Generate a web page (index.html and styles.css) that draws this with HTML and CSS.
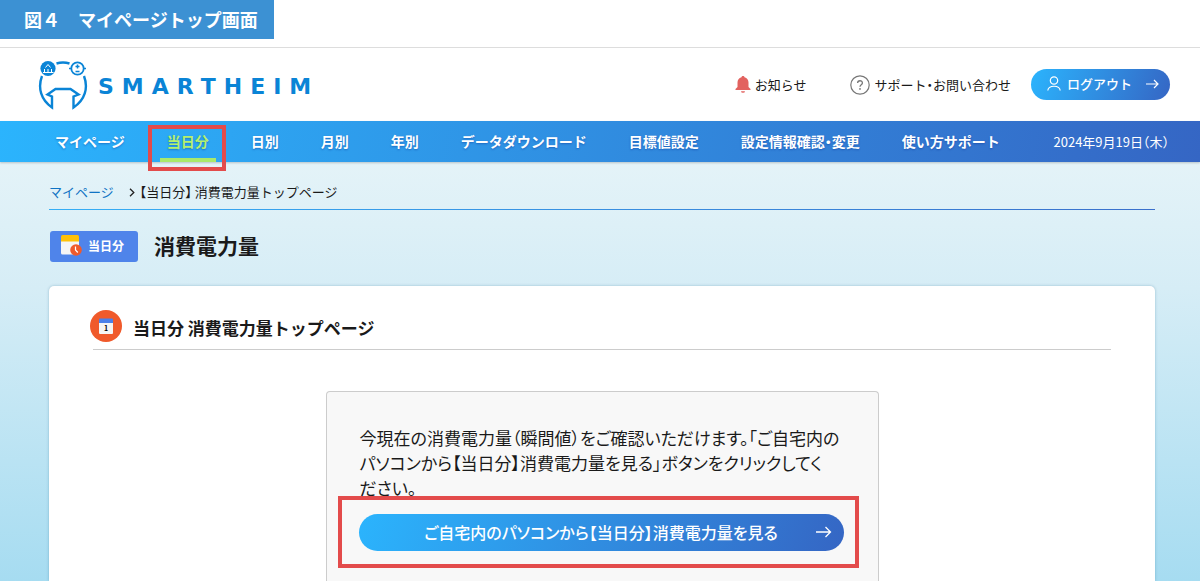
FILE: index.html
```
<!DOCTYPE html>
<html lang="ja">
<head>
    <meta charset="UTF-8">
    <title>当日分 消費電力量</title>
    <link rel="stylesheet" href="styles.css">
</head>
<body>

<p class="caption">図４　マイページトップ画面</p>

<header class="header">
    <a href="#" class="logo">
        <svg class="logo-mark" width="50" height="50" viewBox="0 0 50 50" fill="none" stroke="#0a84d6" stroke-width="2.4">
            <path d="M18.500 3.500Q25 1.500 31.500 3.500"/>
            <path d="M4 16C-.5 28 3 40 14 47.500V36.500L9.500 34.500 17.500 29H32.500L40.500 34.500 35.500 36.500V47.500C47 40 50.500 28 46 16"/>
            <circle cx="10" cy="8.500" r="7.600" fill="#0a84d6" stroke="none"/>
            <path d="M7.500 7.500L10 4.500 12.500 7.500M5 12.500H15.500M6.500 9V12M10 9V12M13.500 9V12" stroke="#fff" stroke-width="1"/>
            <circle cx="39.500" cy="8.500" r="6.200" stroke-width="1.800"/>
            <path d="M31 8.500H34M45 8.500H48M37.500 6.500H41.500M39.500 4.500V8.500M37.500 11.500H41.500" stroke-width="1.500"/>
        </svg>
        <span class="logo-text">SMARTHEIM</span>
    </a>
    <div class="header-links">
        <a href="#" class="header-link news">
            <svg width="16" height="18" viewBox="0 0 16 18" fill="#e2625f">
                <path d="M8 0C7 0 6.500.7 6.500 1.200 3.800 1.800 2.500 4 2.500 6.500V11L.5 13V14H15.500V13L13.500 11V6.500C13.500 4 12.200 1.800 9.500 1.200 9.500.7 9 0 8 0ZM6 15.200A2 1.600 0 0 0 10 15.200Z"/>
            </svg>
            お知らせ
        </a>
        <a href="#" class="header-link">
            <svg width="20" height="20" viewBox="0 0 20 20" fill="none" stroke="#777">
                <circle cx="10" cy="10" r="9.200" stroke-width="1.200"/>
                <path d="M7.600 8C7.600 5 12.400 5 12.400 8 12.400 9.800 10 9.800 10 11.800" stroke-width="1.300"/>
                <circle cx="10" cy="13.900" r=".9" fill="#777" stroke="none"/>
            </svg>
            サポート・お問い合わせ
        </a>
        <button type="button" class="logout">
            <svg width="14" height="15" viewBox="0 0 14 15" fill="none" stroke="#fff" stroke-width="1.200">
                <circle cx="7" cy="4.500" r="3.700"/>
                <path d="M.8 14.500C1.500 8.800 12.500 8.800 13.200 14.500"/>
            </svg>
            <span>ログアウト</span>
            <svg class="arrow" width="13" height="10" viewBox="0 0 13 10" fill="none" stroke="#fff" stroke-width="1.200">
                <path d="M0 5H12M8 1L12 5 8 9"/>
            </svg>
        </button>
    </div>
</header>

<nav class="nav">
    <ul>
        <li><a href="#">マイページ</a></li>
        <li class="active"><a href="#">当日分</a></li>
        <li><a href="#">日別</a></li>
        <li><a href="#">月別</a></li>
        <li><a href="#">年別</a></li>
        <li><a href="#">データダウンロード</a></li>
        <li><a href="#">目標値設定</a></li>
        <li><a href="#">設定情報確認・変更</a></li>
        <li><a href="#">使い方サポート</a></li>
    </ul>
    <span class="date">2024年9月19日（木）</span>
</nav>

<main class="main">
    <div class="breadcrumb">
        <a href="#">マイページ</a>
        <svg width="6" height="9" viewBox="0 0 6 9" fill="none" stroke="#222" stroke-width="1.300">
            <path d="M1 .8L4.800 4.500 1 8.200"/>
        </svg>
        <span>【当日分】 消費電力量トップページ</span>
    </div>

    <div class="page-title">
        <span class="badge">
            <svg width="21" height="21" viewBox="0 0 21 21">
                <path d="M0 6H18V19.500H1.500Q0 19.500 0 18Z" fill="#f5f5f5"/>
                <path d="M1.500 0H16.500Q18 0 18 1.500V6.500H0V1.500Q0 0 1.500 0Z" fill="#ffc107"/>
                <circle cx="15" cy="15" r="5.800" fill="#f05a2b"/>
                <path d="M14.500 11.500V15L16.800 17.500" fill="none" stroke="#fff" stroke-width="1.200"/>
            </svg>
            当日分
        </span>
        <h1>消費電力量</h1>
    </div>

    <section class="card">
        <div class="card-head">
            <svg width="32" height="32" viewBox="0 0 32 32">
                <circle cx="16" cy="16" r="16" fill="#f05a2b"/>
                <rect x="9" y="12" width="14" height="12" rx="1" fill="#f5f5f5"/>
                <path d="M10 8.500H22Q23 8.500 23 9.500V13H9V9.500Q9 8.500 10 8.500Z" fill="#4b80ea"/>
                <text x="16" y="21" class="day">1</text>
            </svg>
            <h2>当日分 消費電力量トップページ</h2>
        </div>
        <div class="panel">
            <p>今現在の消費電力量（瞬間値）をご確認いただけます。「ご自宅内の<br>パソコンから【当日分】消費電力量を見る」ボタンをクリックしてく<br>ださい。</p>
            <div class="button-wrap">
                <button type="button" class="view-button">
                    <span>ご自宅内のパソコンから【当日分】消費電力量を見る</span>
                    <svg width="16" height="12" viewBox="0 0 16 12" fill="none" stroke="#fff" stroke-width="1.300">
                        <path d="M0 6H14.500M9.500 1L14.500 6 9.500 11"/>
                    </svg>
                </button>
            </div>
        </div>
    </section>
</main>

</body>
</html>
```

FILE: styles.css
```
* {
    box-sizing: border-box;
}
body {
    font-family: "Noto Sans CJK JP", sans-serif;
    font-feature-settings: "halt";
    font-size: 13px;
    color: #1a1a1a;
    background-color: #fff;
    margin: 0;
    min-height: 100vh;
    display: flex;
    flex-direction: column;
}
a {
    color: inherit;
    text-decoration: none;
}
h1, h2, p, ul {
    margin: 0;
    padding: 0;
}
button {
    font: inherit;
    font-feature-settings: inherit;
    color: #fff;
    border: none;
    cursor: pointer;
    background: linear-gradient(110deg, #2bb4fd, #3566c4);
}
.caption {
    align-self: flex-start;
    margin-bottom: 8px;
    padding: 0 16px 0 24px;
    font-size: 18px;
    font-weight: bold;
    line-height: 39px;
    color: #fff;
    background-color: #3c91d3;
}
.header {
    display: flex;
    justify-content: space-between;
    align-items: center;
    height: 74px;
    padding: 0 30px 0 38px;
    border-top: 1px solid #ddd;
}
.logo {
    display: flex;
    align-items: center;
    gap: 10px;
}
.logo-text {
    padding-top: 3px;
    font-family: "DejaVu Sans", sans-serif;
    font-size: 22px;
    font-weight: bold;
    letter-spacing: 8px;
    color: #0a84d6;
}
.header-links {
    display: flex;
    align-items: center;
    gap: 20px;
}
.header-link {
    display: flex;
    align-items: center;
    gap: 4px;
}
.news {
    margin-right: 24px;
}
.logout {
    display: flex;
    align-items: center;
    height: 31px;
    padding: 0 11px 2px 16px;
    gap: 6px;
    border-radius: 16px;
    font-weight: 500;
}
.arrow {
    margin-left: 8px;
}
.nav {
    display: flex;
    justify-content: space-between;
    align-items: center;
    height: 41px;
    padding: 0 31px 0 55px;
    color: #fff;
    background: linear-gradient(100deg, #2bb4fd, #3566c4);
    box-shadow: 0 1px 2px rgba(0, 0, 0, 0.2);
    position: relative;
}
.nav ul {
    display: flex;
    gap: 42px;
    list-style: none;
    font-size: 14px;
    font-weight: bold;
    line-height: 41px;
    text-shadow: 0 1px 2px rgba(0, 40, 140, 0.4);
}
.nav .active {
    position: relative;
    color: #b5f06c;
}
.active a::after {
    content: "";
    position: absolute;
    left: -7px;
    right: -7px;
    bottom: 0;
    height: 4px;
    background-color: #a9e96b;
}
/* 赤枠 */
.active::before {
    content: "";
    position: absolute;
    top: 4px;
    bottom: -9px;
    left: -19px;
    right: -17px;
    border: 4px solid #e34b4b;
}
.main {
    flex: 1;
    display: flex;
    flex-direction: column;
    padding: 17px 45px 0 49px;
    background: linear-gradient(#e4f3f8, #d6edf6 30%, #a6dcf1);
}
.breadcrumb {
    display: flex;
    align-items: center;
    line-height: 26px;
    padding-bottom: 5px;
    background: linear-gradient(90deg, #35aef5, #3a70cc) bottom / 100% 1px no-repeat;
}
.breadcrumb a {
    margin-right: 15px;
    color: #0f73c4;
}
.breadcrumb span {
    margin-left: 5px;
}
.page-title {
    display: flex;
    align-items: center;
    gap: 16px;
    margin: 21px 1px 24px;
}
.badge {
    display: flex;
    align-items: center;
    gap: 6px;
    height: 31px;
    padding: 0 14px 2px 11px;
    border-radius: 3px;
    font-size: 12px;
    font-weight: bold;
    color: #fff;
    background-color: #4f84ea;
}
h1 {
    font-size: 21px;
    line-height: 28px;
    padding-bottom: 3px;
}
.card {
    flex: 1;
    display: flex;
    flex-direction: column;
    padding: 23px 44px 0;
    background-color: #fff;
    border-radius: 5px 5px 0 0;
    box-shadow: 0 0 3px rgba(0, 80, 120, 0.3);
}
.card-head {
    display: flex;
    align-items: center;
    gap: 11px;
    padding-bottom: 7px;
    margin-bottom: 41px;
    border-bottom: 1px solid #ccc;
}
.card-head svg {
    margin-left: -3px;
}
.card-head h2 {
    font-size: 17px;
    line-height: 29px;
    padding-top: 4px;
}
.day {
    font-size: 7px;
    font-weight: bold;
    text-anchor: middle;
}
.panel {
    flex: 1;
    align-self: center;
    width: 553px;
    max-width: 100%;
    padding: 33px 33px 0;
    background-color: #f8f8f8;
    border: 1px solid #ccc;
    border-bottom: none;
    border-radius: 4px 4px 0 0;
}
.panel p {
    font-size: 17px;
    font-feature-settings: "palt";
    line-height: 25px;
}
.button-wrap {
    margin: -4px -14px 8px -22px;
    padding: 14px 11px 13px 17px;
    border: 4px solid #e34b4b;
}
.view-button {
    display: flex;
    align-items: center;
    width: 100%;
    height: 37px;
    padding: 0 12px 2px;
    border-radius: 19px;
    font-size: 16px;
    font-weight: 500;
    font-feature-settings: "palt";
}
.view-button span {
    flex: 1;
    padding-left: 16px;
}
```
